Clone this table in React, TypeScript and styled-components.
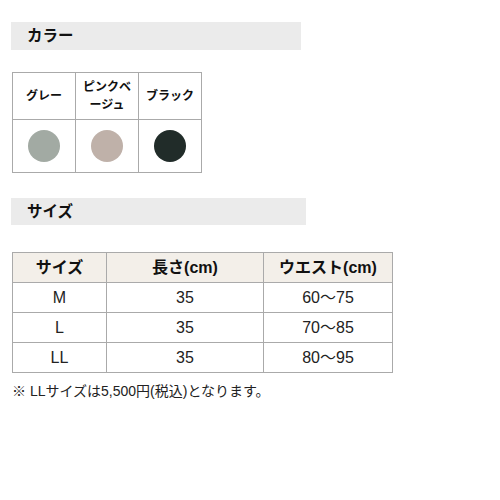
import React from "react";
import styled, { createGlobalStyle } from "styled-components";

const Global = createGlobalStyle`
  html, body { margin: 0; padding: 0; background: #fff; }
  body { font-family: "Liberation Sans", "Noto Sans CJK JP", sans-serif; color: #111; line-height: 1.3; }
`;

const Page = styled.div`
  padding: 22px 0 0 11px;
  display: flex;
  flex-direction: column;
  align-items: flex-start;
`;

const Heading = styled.h2<{ $w: number; $h: number; $mt?: number }>`
  margin: ${(p) => p.$mt ?? 0}px 0 0 0;
  width: ${(p) => p.$w}px;
  height: ${(p) => p.$h}px;
  background: #ebebeb;
  box-sizing: border-box;
  padding-left: 16px;
  display: flex;
  align-items: center;
  font-size: 15.5px;
  line-height: 20px;
  font-weight: 700;
  color: #111;
`;

const Table = styled.table<{ $mt: number }>`
  border-collapse: collapse;
  margin: ${(p) => p.$mt}px 0 0 1px;
  table-layout: fixed;
`;

const ColorHead = styled.th`
  border: 1px solid #aaa;
  width: 62px;
  height: 46px;
  padding: 0;
  font-size: 12px;
  font-weight: 700;
  line-height: 18px;
  text-align: center;
  vertical-align: middle;
`;

const ColorCell = styled.td`
  border: 1px solid #aaa;
  height: 52px;
  padding: 0;
  text-align: center;
  vertical-align: middle;
  line-height: 0;
`;

const Swatch = styled.span<{ $c: string }>`
  display: inline-block;
  width: 32px;
  height: 32px;
  border-radius: 50%;
  background: ${(p) => p.$c};
  vertical-align: middle;
`;

const SizeHead = styled.th<{ $w: number }>`
  border: 1px solid #aaa;
  background: #f3efe9;
  width: ${(p) => p.$w}px;
  height: 29px;
  padding: 0;
  font-size: 16px;
  line-height: 20px;
  font-weight: 700;
  text-align: center;
`;

const SizeCell = styled.td`
  border: 1px solid #aaa;
  height: 29px;
  padding: 0;
  font-size: 16px;
  line-height: 20px;
  text-align: center;
  color: #222;
`;

const Note = styled.p`
  margin: 9px 0 0 1px;
  font-size: 14px;
  line-height: 18px;
  color: #222;
`;

const colors = [
  { name: ["グレー"], c: "#a2aaa3" },
  { name: ["ピンクベ", "ージュ"], c: "#bfb1a9" },
  { name: ["ブラック"], c: "#212c29" },
];

const sizes = [
  ["M", "35", "60〜75"],
  ["L", "35", "70〜85"],
  ["LL", "35", "80〜95"],
];

export default function App() {
  return (
    <>
      <Global />
      <Page>
        <Heading $w={290} $h={28}>カラー</Heading>
        <Table $mt={22}>
          <thead>
            <tr>
              {colors.map((c) => (
                <ColorHead key={c.c}>
                  {c.name.map((n, i) => (
                    <React.Fragment key={i}>
                      {i > 0 && <br />}
                      {n}
                    </React.Fragment>
                  ))}
                </ColorHead>
              ))}
            </tr>
          </thead>
          <tbody>
            <tr>
              {colors.map((c) => (
                <ColorCell key={c.c}>
                  <Swatch $c={c.c} />
                </ColorCell>
              ))}
            </tr>
          </tbody>
        </Table>
        <Heading $w={295} $h={27} $mt={25}>サイズ</Heading>
        <Table $mt={27}>
          <thead>
            <tr>
              <SizeHead $w={93}>サイズ</SizeHead>
              <SizeHead $w={156}>長さ(cm)</SizeHead>
              <SizeHead $w={128}>ウエスト(cm)</SizeHead>
            </tr>
          </thead>
          <tbody>
            {sizes.map((r) => (
              <tr key={r[0]}>
                {r.map((v, i) => (
                  <SizeCell key={i}>{v}</SizeCell>
                ))}
              </tr>
            ))}
          </tbody>
        </Table>
        <Note>※ LLサイズは5,500円(税込)となります。</Note>
      </Page>
    </>
  );
}
